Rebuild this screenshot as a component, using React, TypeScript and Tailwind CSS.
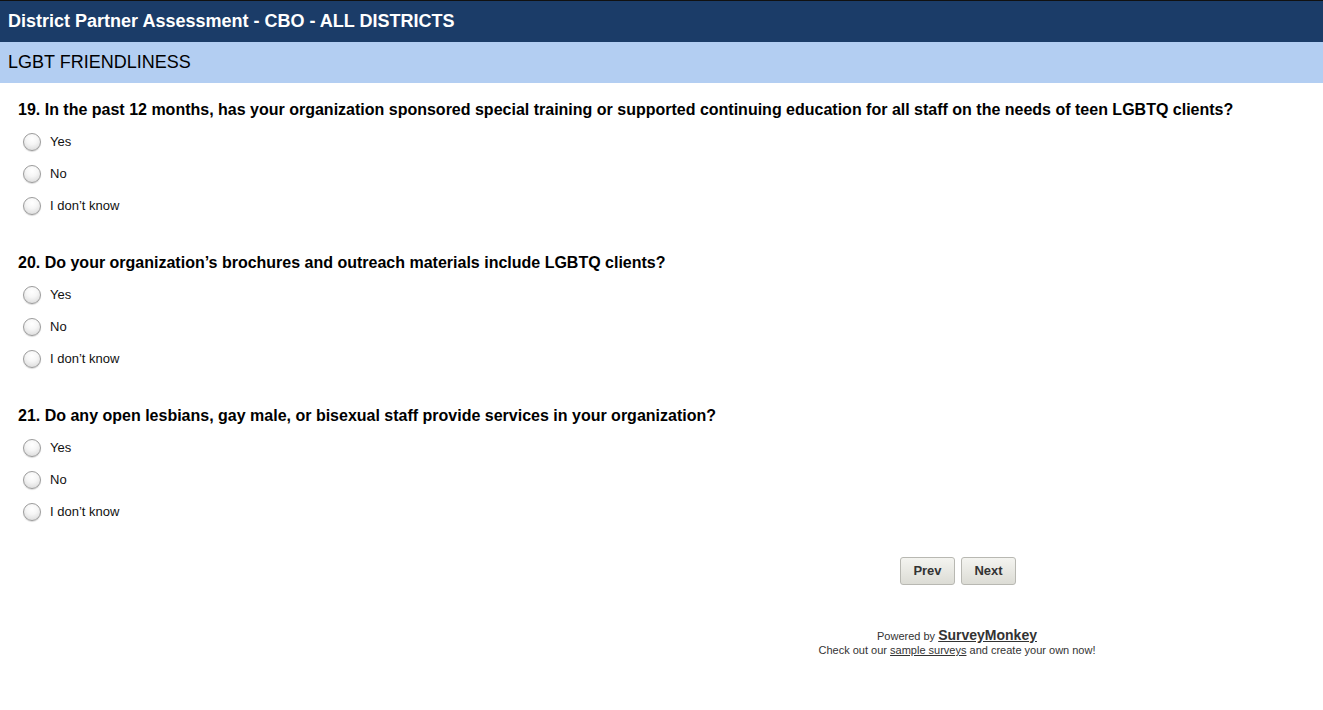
import React from 'react';

const questions = [
  {
    num: 19,
    text: 'In the past 12 months, has your organization sponsored special training or supported continuing education for all staff on the needs of teen LGBTQ clients?',
  },
  {
    num: 20,
    text: 'Do your organization\u2019s brochures and outreach materials include LGBTQ clients?',
  },
  {
    num: 21,
    text: 'Do any open lesbians, gay male, or bisexual staff provide services in your organization?',
  },
];

const options = ['Yes', 'No', 'I don\u2019t know'];

function Radio() {
  return (
    <span className="block w-[18px] h-[18px] rounded-full border border-[#9c9c9c] bg-[radial-gradient(circle_at_50%_30%,#ffffff_0%,#f6f6f6_40%,#d4d4d4_100%)] shadow-[0_1px_1px_rgba(0,0,0,0.15)]" />
  );
}

function Question({ num, text }: { num: number; text: string }) {
  return (
    <div className="mb-[31px]">
      <div className="h-5 leading-5 text-[16px] font-bold text-black">
        {num}. {text}
      </div>
      <div className="mt-[6px]">
        {options.map((o) => (
          <label key={o} className="flex items-center h-8 pl-[5px]">
            <Radio />
            <span className="ml-[9px] text-[13px] text-[#111]">{o}</span>
          </label>
        ))}
      </div>
    </div>
  );
}

export default function App() {
  return (
    <div className="min-h-[710px] bg-white font-['Liberation_Sans',Arial,sans-serif]">
      <div className="h-[42px] bg-[#1b3c68] border-t border-[#111] flex items-center px-2">
        <h1 className="text-[18px] font-bold text-white">District Partner Assessment - CBO - ALL DISTRICTS</h1>
      </div>
      <div className="h-[41px] bg-[#b3cef2] flex items-center px-2">
        <h2 className="text-[18px] text-black">LGBT FRIENDLINESS</h2>
      </div>

      <div className="pt-[17px] pl-[18px]">
        {questions.map((q) => (
          <Question key={q.num} num={q.num} text={q.text} />
        ))}
      </div>

      <div className="flex gap-[6px] pl-[900px] -mt-[2px]">
        <button className="w-[55px] h-[28px] rounded-[3px] border border-[#b8b8b2] bg-linear-to-b from-[#f4f4f0] to-[#dcdcd5] text-[13px] font-bold text-[#333]">
          Prev
        </button>
        <button className="w-[55px] h-[28px] rounded-[3px] border border-[#b8b8b2] bg-linear-to-b from-[#f4f4f0] to-[#dcdcd5] text-[13px] font-bold text-[#333]">
          Next
        </button>
      </div>

      <div className="ml-[757px] w-[400px] text-center mt-[42px] text-[11px] text-[#333]">
        <div className="h-4 leading-4">
          Powered by{' '}
          <a className="text-[14px] font-bold underline text-[#333]">SurveyMonkey</a>
        </div>
        <div className="leading-[14px]">
          Check out our <a className="underline">sample surveys</a> and create your own now!
        </div>
      </div>
    </div>
  );
}
